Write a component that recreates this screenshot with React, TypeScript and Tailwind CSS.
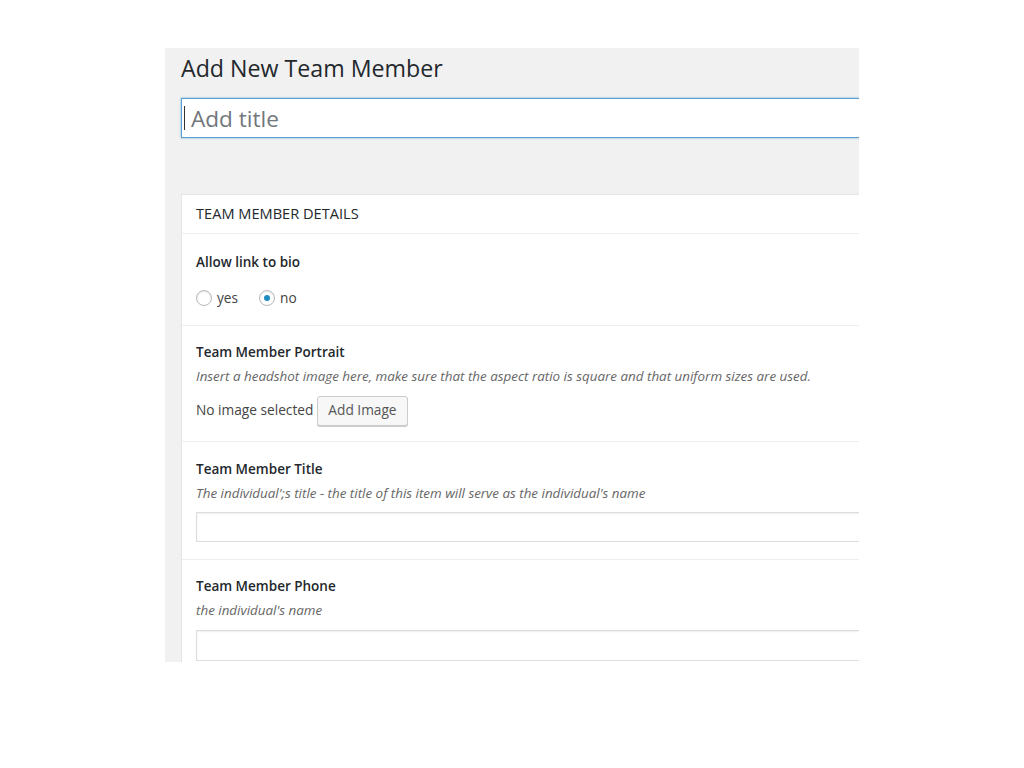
import React from "react";

const FONT = { fontFamily: '"Open Sans", "Noto Sans", sans-serif' };

const Field: React.FC<{ label: string; desc?: string; children?: React.ReactNode; className: string }> = ({ label, desc, children, className }) => (
  <div className={`px-[14px] ${className}`}>
    <div className="text-[13.5px] font-semibold text-[#23282d] leading-[20px]">{label}</div>
    {desc && <div className="text-[13.4px] italic text-[#666] leading-[20px] mt-[4px]">{desc}</div>}
    {children}
  </div>
);

export default function App() {
  return (
    <div className="w-[1024px] h-[768px] bg-white relative" style={FONT}>
      <div className="absolute left-[165px] top-[48px] w-[694px] h-[614px] bg-[#f1f1f1] overflow-hidden">
        <div className="pl-[16px]">
          <h1 className="text-[23.2px] text-[#23282d] leading-[30px] pt-[5px] w-[800px]">Add New Team Member</h1>
          <div className="mt-[15px] w-[720px] h-[40px] bg-white border border-[#5b9dd9] shadow-[0_0_2px_rgba(30,140,190,0.6)] flex items-center pl-[2px]">
            <span className="w-[1px] h-[24px] bg-[#333]" />
            <span className="text-[22.6px] text-[#72777c] leading-none ml-[6px] mt-[2px]">Add title</span>
          </div>
          <div className="mt-[56px] w-[720px] h-[600px] bg-white border border-[#e5e5e5]">
            <div className="px-[14px] h-[39px] flex items-center border-b border-[#eeeeee]">
              <span className="text-[14.6px] text-[#23282d] uppercase">Team member details</span>
            </div>
            <Field label="Allow link to bio" className="pt-[18px] pb-[16px] border-b border-[#eeeeee]">
              <div className="flex items-center mt-[16px] text-[13.7px] text-[#444]">
                <span className="w-[16px] h-[16px] rounded-full border border-[#b4b9be] bg-white shadow-[inset_0_1px_2px_rgba(0,0,0,0.1)]" />
                <span className="ml-[5px]">yes</span>
                <span className="ml-[21px] w-[16px] h-[16px] rounded-full border border-[#b4b9be] bg-white flex items-center justify-center shadow-[inset_0_1px_2px_rgba(0,0,0,0.1)]">
                  <span className="w-[6px] h-[6px] rounded-full bg-[#1e8cbe]" />
                </span>
                <span className="ml-[5px]">no</span>
              </div>
            </Field>
            <Field label="Team Member Portrait" desc="Insert a headshot image here, make sure that the aspect ratio is square and that uniform sizes are used." className="pt-[16px] pb-[15px] border-b border-[#eeeeee]">
              <div className="flex items-center mt-[10px] text-[13.7px] text-[#444]">
                <span>No image selected</span>
                <button type="button" className="ml-[4px] h-[30px] px-[10px] bg-[#f7f7f7] border border-[#cccccc] rounded-[3px] shadow-[0_1px_0_#ccc] text-[13.7px] text-[#555]">
                  Add Image
                </button>
              </div>
            </Field>
            <Field label="Team Member Title" desc="The individual';s title - the title of this item will serve as the individual's name" className="pt-[17px] pb-[17px] border-b border-[#eeeeee]">
              <div className="mt-[9px] h-[30px] w-[700px] border border-[#dddddd] shadow-[inset_0_1px_2px_rgba(0,0,0,0.07)] bg-white" />
            </Field>
            <Field label="Team Member Phone" desc="the individual's name" className="pt-[16px] pb-[20px]">
              <div className="mt-[10px] h-[31px] w-[700px] border border-[#dddddd] shadow-[inset_0_1px_2px_rgba(0,0,0,0.07)] bg-white" />
            </Field>
          </div>
        </div>
      </div>
    </div>
  );
}
